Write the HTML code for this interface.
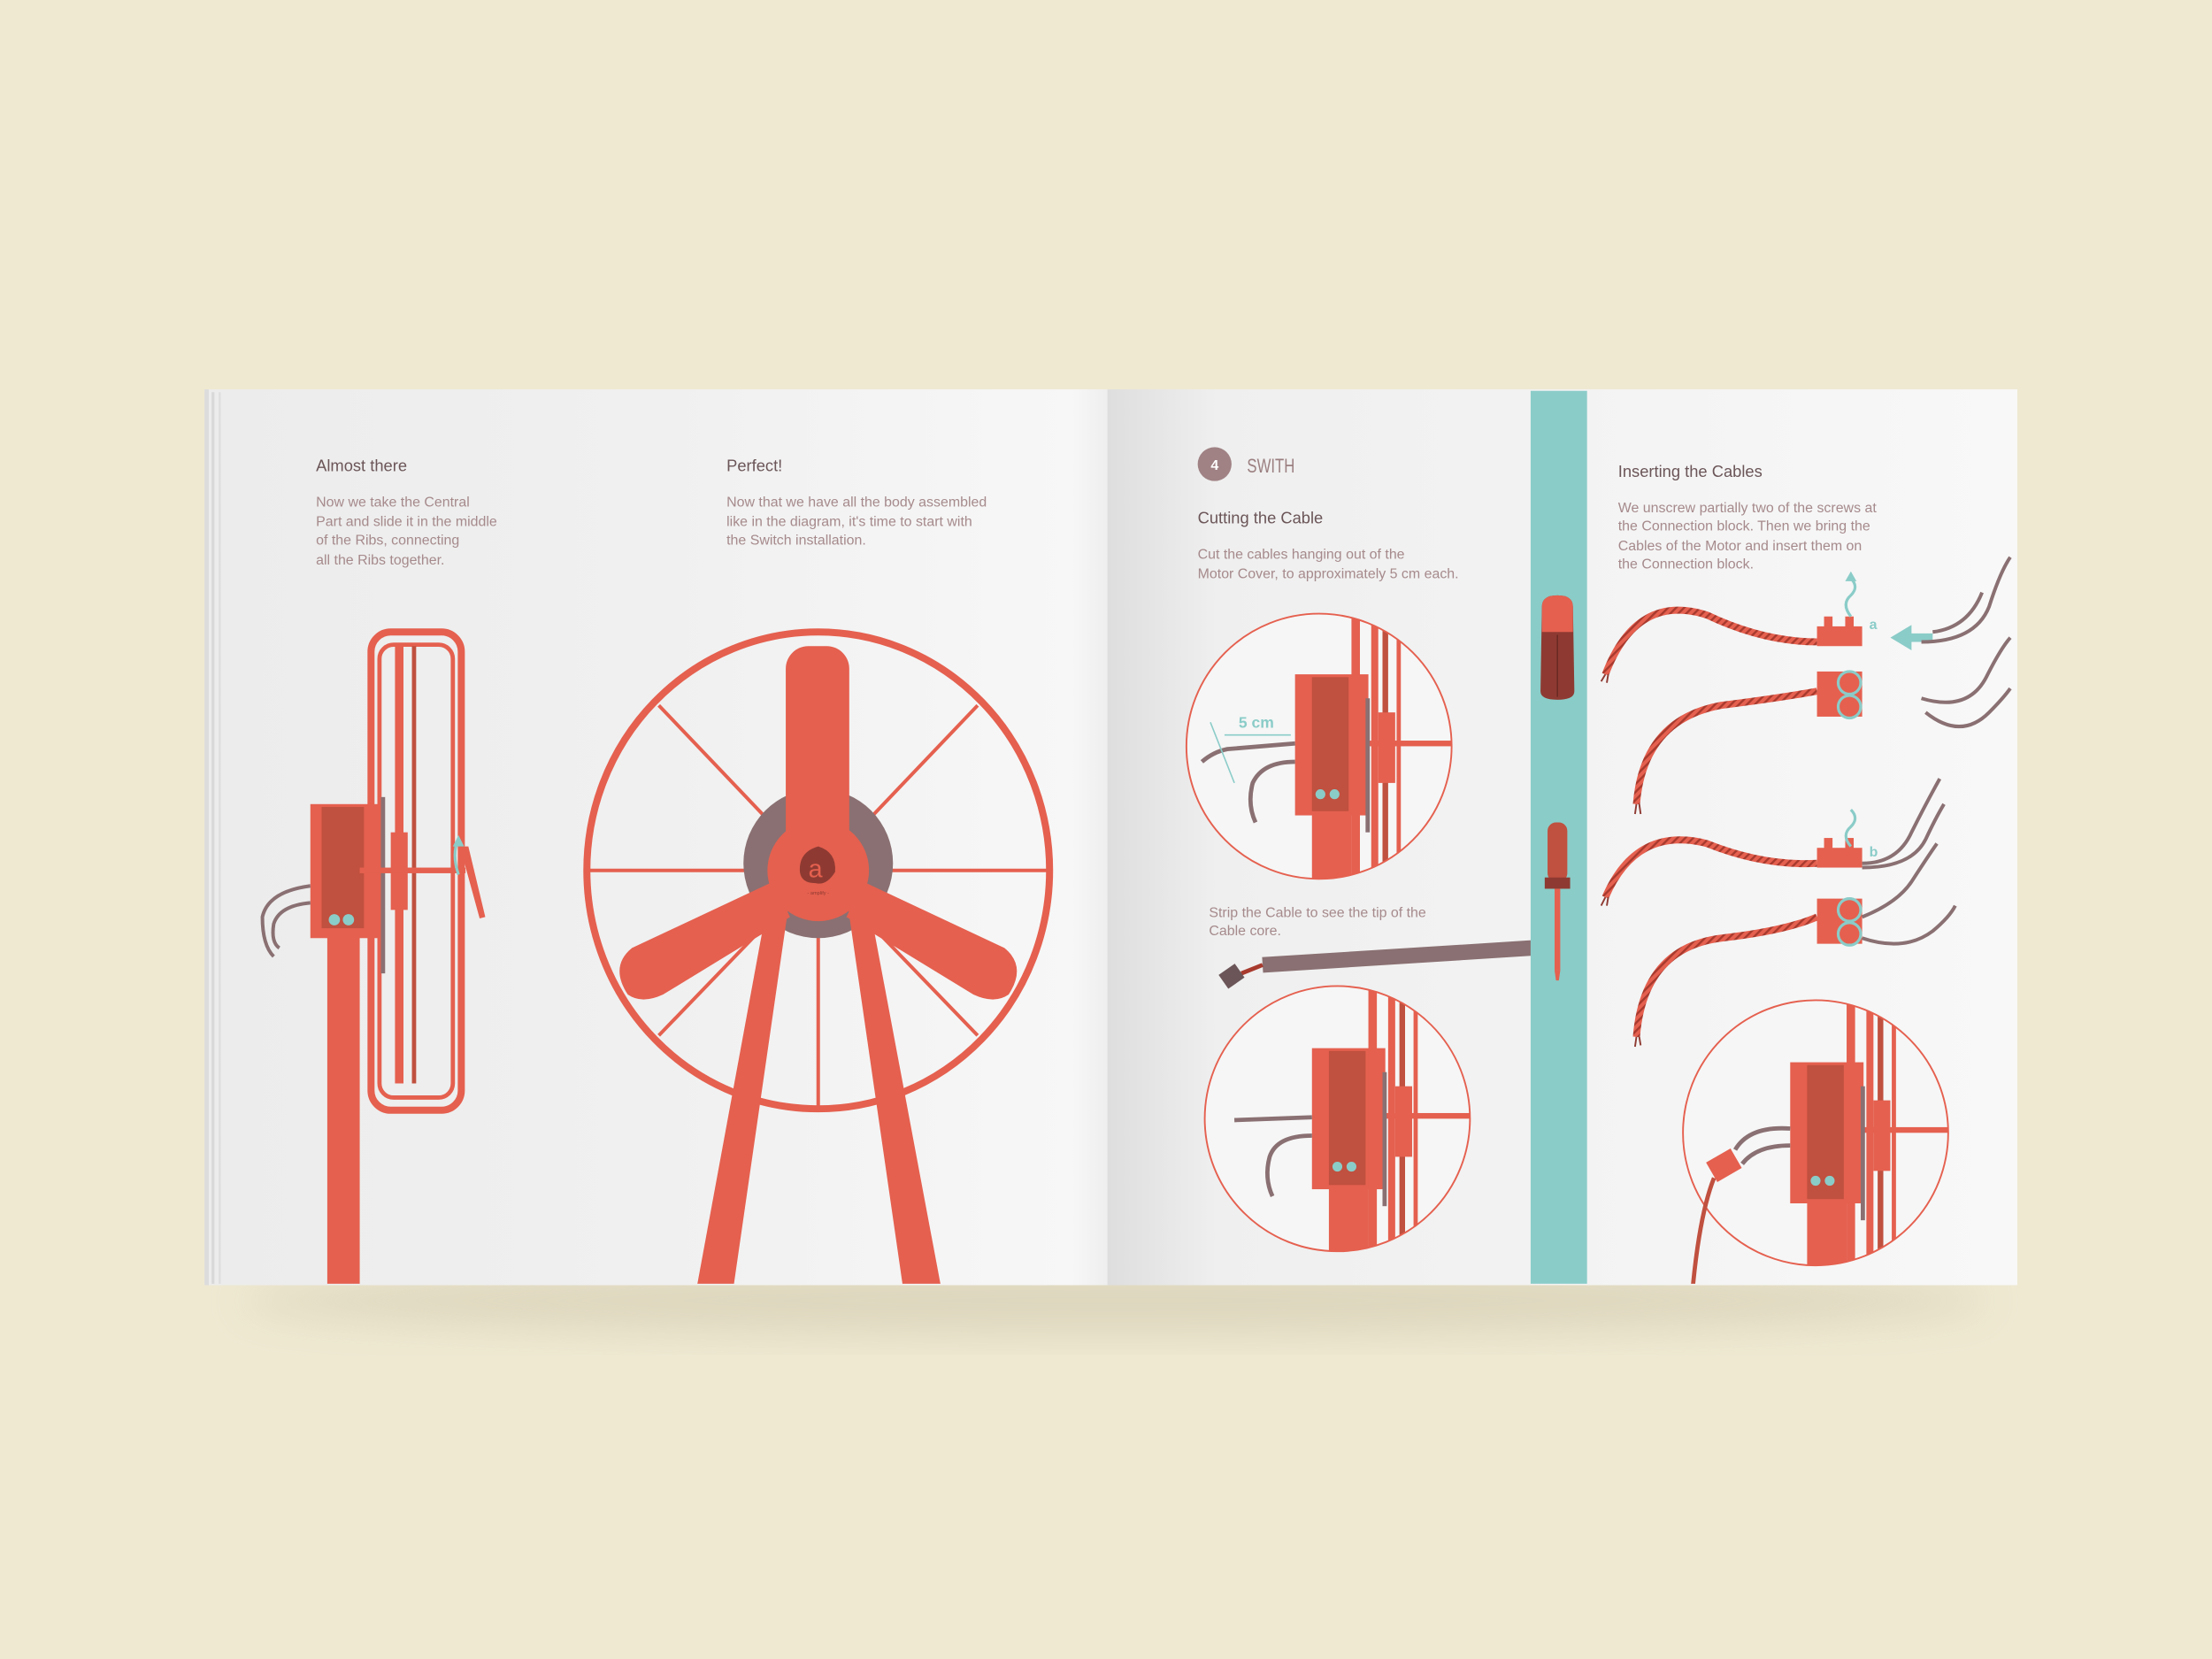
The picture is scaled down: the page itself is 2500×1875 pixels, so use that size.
<!DOCTYPE html>
<html><head><meta charset="utf-8"><style>
html,body{margin:0;padding:0;background:#efe9d2;}
svg{display:block}
text{font-family:"Liberation Sans",sans-serif;}
</style></head><body>
<svg width="2500" height="1875" viewBox="0 0 1568 1176" xmlns="http://www.w3.org/2000/svg">
<defs>
<linearGradient id="lp" x1="0" x2="1" y1="0" y2="0">
<stop offset="0" stop-color="#ececec"/><stop offset="0.5" stop-color="#f0f0f0"/><stop offset="0.96" stop-color="#f7f7f7"/><stop offset="1" stop-color="#eeeeee"/></linearGradient>
<linearGradient id="rp" x1="0" x2="1" y1="0" y2="0">
<stop offset="0" stop-color="#dedede"/><stop offset="0.12" stop-color="#efefef"/><stop offset="1" stop-color="#f8f8f8"/></linearGradient>
<filter id="sh" x="-10%" y="-10%" width="120%" height="140%"><feGaussianBlur stdDeviation="14"/></filter>
<clipPath id="c1"><circle cx="935" cy="529" r="94"/></clipPath>
<clipPath id="c2"><circle cx="948" cy="793" r="94"/></clipPath>
<clipPath id="c3"><circle cx="1287" cy="803" r="94"/></clipPath>
<clipPath id="pg"><rect x="145" y="277" width="1285" height="633"/></clipPath>
<pattern id="rope" width="4" height="4" patternUnits="userSpaceOnUse" patternTransform="rotate(45)"><rect width="4" height="4" fill="#e5604f"/><rect width="1.5" height="4" fill="#a83a2e"/></pattern>
</defs>
<ellipse cx="790" cy="922" rx="620" ry="24" fill="#c8c0a5" opacity="0.45" filter="url(#sh)"/>
<!-- pages -->
<rect x="145" y="276" width="641" height="635" fill="url(#lp)"/>
<rect x="785" y="276" width="645" height="635" fill="url(#rp)"/>
<rect x="145" y="276" width="3" height="635" fill="#dcdcdc"/>
<rect x="150" y="278" width="2" height="632" fill="#d8d8d8"/>
<rect x="155" y="278" width="1.5" height="632" fill="#dedede"/>
<g clip-path="url(#pg)">
<!-- LEFT text -->
<text x="224" y="334" font-size="11.5" fill="#6b5558">Almost there</text>
<g font-size="10" fill="#a68a8c">
<text x="224" y="359">Now we take the Central</text>
<text x="224" y="373">Part and slide it in the middle</text>
<text x="224" y="386">of the Ribs, connecting</text>
<text x="224" y="400">all the Ribs together.</text>
<text x="515" y="359">Now that we have all the body assembled</text>
<text x="515" y="373">like in the diagram, it's time to start with</text>
<text x="515" y="386">the Switch installation.</text>
</g>
<text x="515" y="334" font-size="11.5" fill="#6b5558">Perfect!</text>
<!-- side fan -->
<g fill="#e5604f">
<rect x="232" y="640" width="23" height="272"/>
<rect x="263" y="448" width="64" height="339" rx="14" fill="none" stroke="#e5604f" stroke-width="5"/>
<rect x="269" y="457" width="52" height="321" rx="10" fill="none" stroke="#e5604f" stroke-width="3"/>
<rect x="280" y="458" width="6" height="310"/>
<rect x="292" y="458" width="3" height="310" fill="#c0503f"/>
<rect x="220" y="570" width="48" height="95"/>
<rect x="228" y="572" width="30" height="86" fill="#c0503f"/>
<rect x="270" y="565" width="3" height="125" fill="#8a7072"/>
<rect x="277" y="590" width="12" height="55"/>
<rect x="255" y="615" width="75" height="4"/>
<path d="M326 600 L332 600 L344 650 L340 651Z"/>
</g>
<path d="M325 620 Q320 605 325 595" stroke="#8accc8" stroke-width="2" fill="none"/>
<path d="M321 600 L325 592 L329 600Z" fill="#8accc8"/>
<circle cx="237" cy="652" r="4" fill="#8accc8"/><circle cx="247" cy="652" r="4" fill="#8accc8"/>
<path d="M220 628 Q190 632 186 650 Q186 670 194 678" stroke="#8a7072" stroke-width="2.5" fill="none"/>
<path d="M220 640 Q198 642 194 655 Q192 668 198 672" stroke="#8a7072" stroke-width="2.5" fill="none"/>
<!-- front fan -->
<g stroke="#e5604f" fill="none">
<ellipse cx="580" cy="617" rx="164" ry="169" stroke-width="5"/>
<g stroke-width="2.5">
<line x1="418" y1="617" x2="742" y2="617"/>
<line x1="467" y1="500" x2="548" y2="585"/>
<line x1="693" y1="500" x2="612" y2="585"/>
<line x1="467" y1="734" x2="548" y2="650"/>
<line x1="693" y1="734" x2="612" y2="650"/>
<line x1="580" y1="660" x2="580" y2="784"/>
</g></g>
<circle cx="580" cy="612" r="53" fill="#8a7072"/>
<g fill="#e5604f">
<rect x="557" y="458" width="45" height="150" rx="16"/>
<path d="M548 625 L448 672 Q432 685 445 705 Q455 712 470 705 L560 650Z"/>
<path d="M612 625 L712 672 Q728 685 715 705 Q705 712 690 705 L600 650Z"/>
<path d="M545 635 L560 635 L520 912 L494 912Z"/>
<path d="M600 635 L615 635 L667 912 L640 912Z"/>
<circle cx="580" cy="617" r="36"/>
</g>
<path d="M567 618 Q566 604 580 600 Q593 604 592 618 Q586 628 578 626 Q568 626 567 618Z" fill="#8e3a32"/>
<text x="573" y="622" font-size="18" font-family="Liberation Serif,serif" fill="#e5604f">a</text>
<text x="580" y="634" font-size="3.5" fill="#8e3a32" text-anchor="middle">- amplify -</text>
<!-- RIGHT page text -->
<circle cx="861" cy="329" r="12" fill="#a08284"/>
<text x="861" y="333" font-size="10" fill="#fff" text-anchor="middle" font-weight="bold">4</text>
<text x="884" y="335" font-size="14" fill="#9b7f80" font-family="Liberation Sans Narrow,Liberation Sans,sans-serif" transform="translate(884 0) scale(0.75 1) translate(-884 0)">SWITH</text>
<text x="849" y="371" font-size="11.5" fill="#6b5558">Cutting the Cable</text>
<g font-size="10" fill="#a68a8c">
<text x="849" y="396">Cut  the cables hanging  out of the</text>
<text x="849" y="410">Motor Cover, to approximately 5 cm each.</text>
<text x="857" y="650">Strip the Cable to see the tip of the</text>
<text x="857" y="663">Cable core.</text>
<text x="1147" y="363">We unscrew partially two of the screws  at</text>
<text x="1147" y="376">the Connection  block. Then we bring the</text>
<text x="1147" y="390">Cables of the  Motor and insert them on</text>
<text x="1147" y="403">the Connection  block.</text>
</g>
<text x="1147" y="338" font-size="11.5" fill="#6b5558">Inserting the Cables</text>
<!-- zoom circles -->
<g clip-path="url(#c1)">
<rect x="840" y="435" width="190" height="190" fill="#f6f6f6"/>
<g fill="#e5604f">
<rect x="930" y="480" width="28" height="150"/><rect x="918" y="478" width="52" height="100"/>
<rect x="958" y="435" width="6" height="190"/><rect x="972" y="435" width="5" height="190"/>
<rect x="980" y="440" width="4" height="190" fill="#c0503f"/><rect x="990" y="440" width="3" height="190"/>
<rect x="965" y="525" width="70" height="4"/>
<rect x="977" y="505" width="12" height="50"/>
</g>
<rect x="930" y="480" width="26" height="95" fill="#c0503f"/>
<rect x="968" y="495" width="3" height="95" fill="#8a7072"/>
<circle cx="936" cy="563" r="3.5" fill="#8accc8"/><circle cx="946" cy="563" r="3.5" fill="#8accc8"/>
<path d="M918 527 L870 531 Q860 533 852 540" stroke="#8a7072" stroke-width="3" fill="none"/>
<path d="M918 540 Q895 540 888 555 Q884 570 890 583" stroke="#8a7072" stroke-width="3" fill="none"/>
<line x1="868" y1="521" x2="915" y2="521" stroke="#8accc8" stroke-width="1"/>
<line x1="858" y1="512" x2="875" y2="555" stroke="#8accc8" stroke-width="1"/>
</g>
<circle cx="935" cy="529" r="94" fill="none" stroke="#e5604f" stroke-width="1.2"/>
<text x="878" y="516" font-size="11" fill="#8accc8" font-weight="bold">5 cm</text>
<g clip-path="url(#c2)">
<rect x="853" y="699" width="190" height="190" fill="#f6f6f6"/>
<g fill="#e5604f">
<rect x="942" y="745" width="28" height="150"/><rect x="930" y="743" width="52" height="100"/>
<rect x="970" y="699" width="6" height="190"/><rect x="984" y="699" width="5" height="190"/>
<rect x="992" y="704" width="4" height="190" fill="#c0503f"/><rect x="1002" y="704" width="3" height="190"/>
<rect x="977" y="789" width="70" height="4"/><rect x="989" y="770" width="12" height="50"/>
</g>
<rect x="942" y="745" width="26" height="95" fill="#c0503f"/>
<rect x="980" y="760" width="3" height="95" fill="#8a7072"/>
<circle cx="948" cy="827" r="3.5" fill="#8accc8"/><circle cx="958" cy="827" r="3.5" fill="#8accc8"/>
<path d="M930 792 L875 794" stroke="#8a7072" stroke-width="3" fill="none"/>
<path d="M930 805 Q905 805 900 820 Q896 835 902 848" stroke="#8a7072" stroke-width="3" fill="none"/>
</g>
<circle cx="948" cy="793" r="94" fill="none" stroke="#e5604f" stroke-width="1.2"/>
<g clip-path="url(#c3)">
<rect x="1192" y="709" width="190" height="190" fill="#f6f6f6"/>
<g fill="#e5604f">
<rect x="1281" y="755" width="28" height="150"/><rect x="1269" y="753" width="52" height="100"/>
<rect x="1309" y="709" width="6" height="190"/><rect x="1323" y="709" width="5" height="190"/>
<rect x="1331" y="714" width="4" height="190" fill="#c0503f"/><rect x="1341" y="714" width="3" height="190"/>
<rect x="1316" y="799" width="70" height="4"/><rect x="1328" y="780" width="12" height="50"/>
</g>
<rect x="1281" y="755" width="26" height="95" fill="#c0503f"/>
<rect x="1319" y="770" width="3" height="95" fill="#8a7072"/>
<circle cx="1287" cy="837" r="3.5" fill="#8accc8"/><circle cx="1297" cy="837" r="3.5" fill="#8accc8"/>
<path d="M1269 800 Q1240 798 1230 815" stroke="#8a7072" stroke-width="3" fill="none"/>
<path d="M1269 812 Q1245 812 1235 825" stroke="#8a7072" stroke-width="3" fill="none"/>
<rect x="1212" y="818" width="20" height="16" fill="#e5604f" transform="rotate(-30 1222 826)"/>
</g>
<circle cx="1287" cy="803" r="94" fill="none" stroke="#e5604f" stroke-width="1.2"/>
<path d="M1215 835 Q1205 860 1200 912" stroke="#c0503f" stroke-width="3" fill="none"/>
<!-- stripped cable -->
<path d="M895 684 L1086 672" stroke="#8a7072" stroke-width="11" fill="none"/>
<path d="M880 690 L895 684" stroke="#a83a2e" stroke-width="3"/>
<rect x="866" y="686" width="14" height="12" fill="#6b5558" transform="rotate(-35 873 692)"/>
<!-- teal strip -->
<rect x="1085" y="277" width="40" height="634" fill="#8accc8"/>
<path d="M1093 430 Q1093 422 1104 422 Q1115 422 1115 430 L1116 490 Q1116 496 1104 496 Q1092 496 1092 490Z" fill="#8e3a32"/>
<path d="M1093 430 Q1093 422 1104 422 Q1115 422 1115 430 L1115 448 L1093 448Z" fill="#e5604f"/>
<line x1="1104" y1="450" x2="1104" y2="494" stroke="#6b2a24" stroke-width="1"/>
<rect x="1097" y="583" width="14" height="42" rx="6" fill="#c0503f"/>
<rect x="1095" y="622" width="18" height="8" fill="#8e3a32"/>
<rect x="1102" y="630" width="4" height="58" fill="#e5604f"/>
<path d="M1102 688 L1106 688 L1105 695 L1103 695Z" fill="#e5604f"/>
<!-- ropes -->
<g fill="none" stroke="url(#rope)" stroke-width="5">
<path d="M1138 478 Q1160 420 1210 436 Q1250 455 1288 455"/>
<path d="M1160 570 Q1165 510 1220 500 Q1260 495 1288 490"/>
<path d="M1138 636 Q1160 585 1210 598 Q1250 614 1288 612"/>
<path d="M1160 735 Q1165 672 1220 665 Q1265 660 1288 650"/>
</g>
<g stroke="#8e3a32" stroke-width="1.2" fill="none">
<path d="M1138 478 l-3 5 M1140 478 l-1 6 M1160 570 l-1 7 M1162 570 l1 7 M1138 636 l-3 6 M1140 636 l-1 6 M1160 735 l-1 7 M1162 735 l1 6"/>
</g>
<!-- blocks -->
<g fill="#e5604f">
<rect x="1288" y="444" width="32" height="14"/><rect x="1293" y="437" width="6" height="8"/><rect x="1308" y="437" width="6" height="8"/>
<rect x="1288" y="476" width="32" height="32"/>
<rect x="1288" y="601" width="32" height="14"/><rect x="1293" y="594" width="6" height="8"/><rect x="1308" y="594" width="6" height="8"/>
<rect x="1288" y="637" width="32" height="32"/>
</g>
<g fill="none" stroke="#8accc8" stroke-width="2">
<circle cx="1311" cy="484" r="8"/><circle cx="1311" cy="501" r="8"/>
<circle cx="1311" cy="645" r="8"/><circle cx="1311" cy="662" r="8"/>
<path d="M1312 437 Q1305 428 1312 422 Q1318 416 1312 410"/>
<path d="M1312 600 Q1305 592 1312 586 Q1318 580 1312 574"/>
</g>
<path d="M1308 412 L1312 405 L1316 412Z" fill="#8accc8"/>
<path d="M1340 452 L1355 443 L1355 449 L1370 449 L1370 455 L1355 455 L1355 461Z" fill="#8accc8"/>
<text x="1325" y="446" font-size="10" fill="#8accc8" font-weight="bold">a</text>
<text x="1325" y="607" font-size="10" fill="#8accc8" font-weight="bold">b</text>
<g fill="none" stroke="#8a7072" stroke-width="2.5">
<path d="M1362 455 Q1400 455 1410 430 Q1418 405 1425 395"/>
<path d="M1370 448 Q1395 445 1405 420"/>
<path d="M1362 495 Q1395 505 1408 480 Q1418 460 1425 452"/>
<path d="M1365 505 Q1390 525 1410 505 Q1420 495 1425 488"/>
<path d="M1320 612 Q1345 612 1355 590 Q1365 570 1375 552"/>
<path d="M1320 615 Q1355 615 1365 595 Q1372 580 1378 570"/>
<path d="M1320 650 Q1345 640 1355 625 Q1368 605 1373 598"/>
<path d="M1320 665 Q1350 675 1370 660 Q1382 650 1386 642"/>
</g>
</g>
</svg>
</body></html>
